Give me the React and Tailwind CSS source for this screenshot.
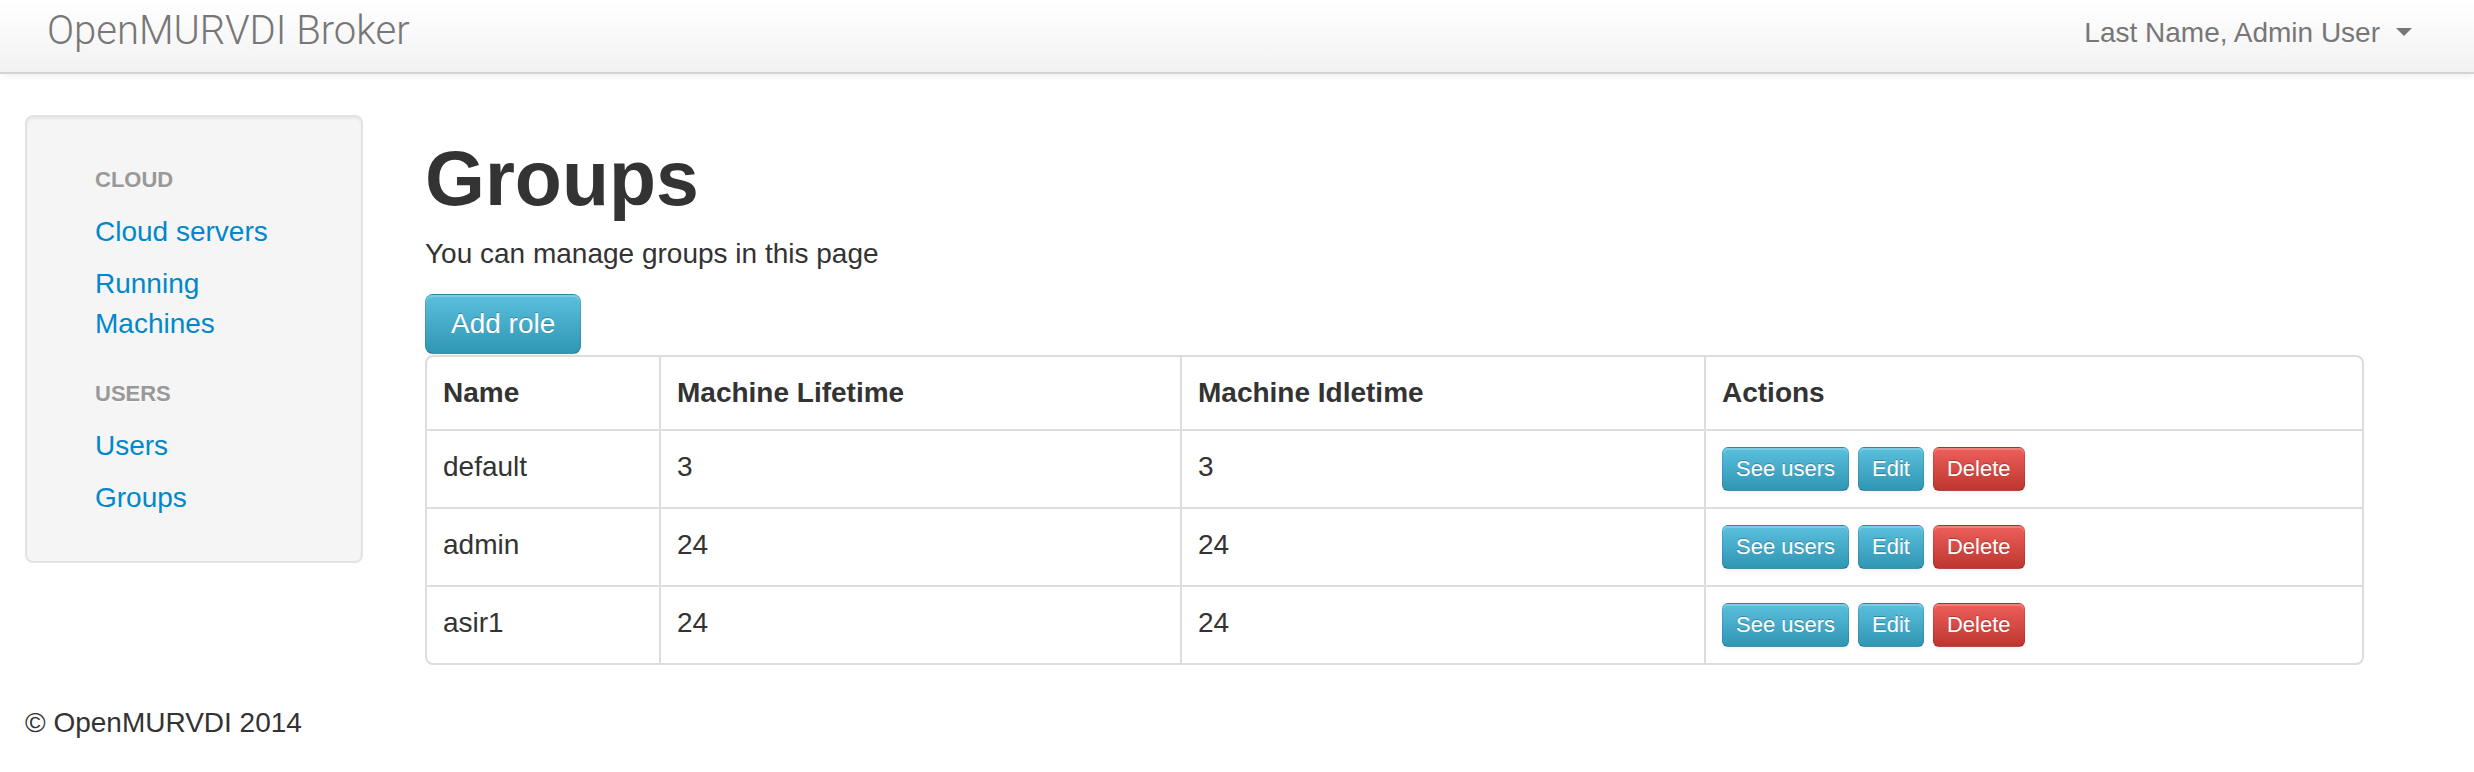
import React from "react";

const rows = [
  { name: "default", life: "3", idle: "3" },
  { name: "admin", life: "24", idle: "24" },
  { name: "asir1", life: "24", idle: "24" },
];

const btnBase =
  "flex h-[44px] items-center rounded-[6px] border border-[rgba(0,0,0,0.1)] border-b-[rgba(0,0,0,0.25)] px-[13px] text-[22px] leading-[24px] text-white [text-shadow:0_-1px_0_rgba(0,0,0,0.25)] shadow-[inset_0_2px_0_rgba(255,255,255,0.2),0_2px_4px_rgba(0,0,0,0.05)]";
const info = "bg-linear-to-b from-[#5bc0de] to-[#2f96b4]";
const danger = "bg-linear-to-b from-[#ee5f5b] to-[#bd362f]";

function Row({ cells, header, first }) {
  return (
    <div
      className={
        "grid grid-cols-[232px_521px_524px_1fr] " +
        (first ? "" : "border-t-2 border-[#ddd]")
      }
    >
      {cells.map((c, i) => (
        <div
          key={i}
          className={
            "px-[16px] py-[16px] " +
            (i > 0 ? "border-l-2 border-[#ddd] " : "") +
            (header ? "font-bold" : "")
          }
        >
          {c}
        </div>
      ))}
    </div>
  );
}

function Actions() {
  return (
    <div className="flex gap-[9px]">
      <button className={btnBase + " " + info}>See users</button>
      <button className={btnBase + " " + info}>Edit</button>
      <button className={btnBase + " " + danger}>Delete</button>
    </div>
  );
}

export default function App() {
  return (
    <div className="min-h-[772px] w-[2474px] bg-white font-['Liberation_Sans',Arial,sans-serif] text-[28px] leading-[40px] text-[#333]">
      <header className="flex h-[74px] items-start border-b-2 border-[#d4d4d4] bg-linear-to-b from-white to-[#f2f2f2] shadow-[0_2px_8px_rgba(0,0,0,0.065)]">
        <div className="pl-[47px] pt-[11px] font-['Roboto',sans-serif] text-[40px] font-light leading-[40px] text-[#777]">
          OpenMURVDI Broker
        </div>
        <div className="ml-auto flex items-start pr-[62px]">
          <span className="pt-[13px] text-[#777]">Last Name, Admin User</span>
          <span className="ml-[16px] mt-[28px] h-0 w-0 border-x-[8px] border-t-[8px] border-x-transparent border-t-[#777]" />
        </div>
      </header>

      <div className="flex items-start pt-[41px]">
        <aside className="ml-[25px] w-[338px] rounded-[8px] border-2 border-[#e3e3e3] bg-[#f5f5f5] px-[68px] pb-[37px] pt-[37px] shadow-[inset_0_2px_2px_rgba(0,0,0,0.05)]">
          <div className="py-[6px] text-[22px] font-bold uppercase leading-[40px] text-[#999] [text-shadow:0_1px_0_rgba(255,255,255,0.5)]">
            Cloud
          </div>
          <a className="block py-[6px] text-[#0088cc]" href="#">
            Cloud servers
          </a>
          <a className="block py-[6px] text-[#0088cc]" href="#">
            Running Machines
          </a>
          <div className="mt-[18px] py-[6px] text-[22px] font-bold uppercase leading-[40px] text-[#999] [text-shadow:0_1px_0_rgba(255,255,255,0.5)]">
            Users
          </div>
          <a className="block py-[6px] text-[#0088cc]" href="#">
            Users
          </a>
          <a className="block py-[6px] text-[#0088cc]" href="#">
            Groups
          </a>
        </aside>

        <main className="ml-[62px] w-[1939px]">
          <h1 className="mt-[23px] text-[77px] font-bold leading-[80px] text-[#333]">
            Groups
          </h1>
          <p className="mt-[16px]">You can manage groups in this page</p>
          <button className="mt-[20px] flex h-[60px] items-center rounded-[8px] border border-[rgba(0,0,0,0.1)] border-b-[rgba(0,0,0,0.25)] bg-linear-to-b from-[#5bc0de] to-[#2f96b4] px-[25px] text-[28px] leading-[40px] text-white shadow-[inset_0_2px_0_rgba(255,255,255,0.2),0_2px_4px_rgba(0,0,0,0.05)] [text-shadow:0_-1px_0_rgba(0,0,0,0.25)]">
            Add role
          </button>
          <div className="mt-[1px] overflow-hidden rounded-[8px] border-2 border-[#ddd]">
            <Row
              header
              first
              cells={["Name", "Machine Lifetime", "Machine Idletime", "Actions"]}
            />
            {rows.map((r) => (
              <Row key={r.name} cells={[r.name, r.life, r.idle, <Actions />]} />
            ))}
          </div>
        </main>
      </div>

      <footer className="mt-[38px] pb-[29px] pl-[25px]">© OpenMURVDI 2014</footer>
    </div>
  );
}
